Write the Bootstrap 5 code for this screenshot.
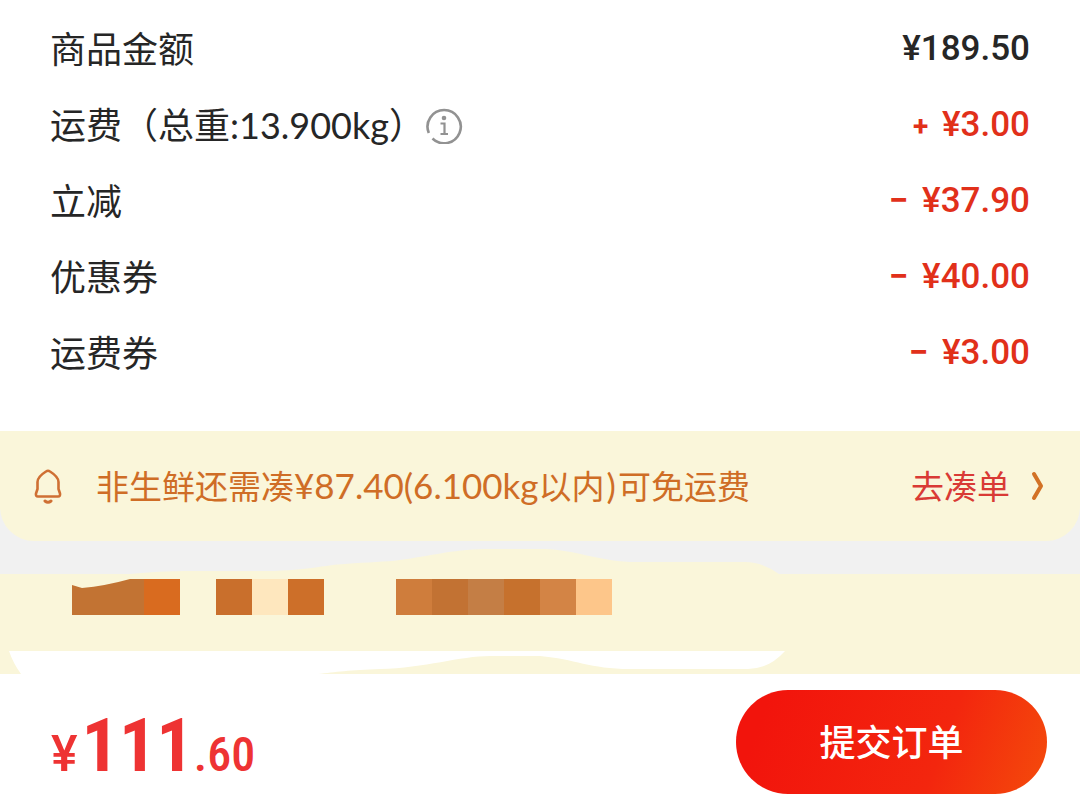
<!DOCTYPE html>
<html lang="zh-CN">
<head>
<meta charset="utf-8">
<meta name="viewport" content="width=device-width, initial-scale=1">
<title>确认订单</title>
<link href="https://cdn.jsdelivr.net/npm/bootstrap@5.3.0/dist/css/bootstrap.min.css" rel="stylesheet">
<style>
  body { font-family: Lato, "Noto Sans CJK SC", sans-serif; font-size: 36px; line-height: 76px; color: #262626; background: #fff; }
  .fees { padding: 11px 50px 40px; }
  .amount { font-family: Roboto, "Noto Sans CJK SC", sans-serif; font-size: 35px; font-weight: 500; white-space: pre; }
  .minus { color: #e1301a; }
  .sign { font-weight: 700; line-height: 1; margin-right: 5px; }
  .sign-plus { font-size: 28px; }
  .info-btn { width: 38px; height: 38px; }
  .notice-wrap { background: #f1f1f1; }
  .notice { background: #faf6da; color: #cf6d26; border-radius: 0 0 34px 34px; padding: 0 35px 0 34px; font-size: 33px; line-height: 110px; }
  .notice-num { font-size: 35px; line-height: 1; }
  .notice-paren { margin: 0 2px; }
  .notice-text { margin-left: 34px; }
  .notice-link { color: #d93a35; gap: 21px; }
  .redacted { height: 133px; }
  .checkout { padding: 16px 33px 17px 51px; }
  .total { color: #ee3333; font-family: Roboto, sans-serif; font-size: 50px; font-weight: 500; line-height: 80px; padding-top: 24px; }
  .total-int, .total-cents { font-family: "Liberation Sans Narrow", "Roboto Condensed", Roboto, sans-serif; }
  .total-int { font-size: 74px; font-weight: 700; line-height: 60px; margin-left: 4px; }
  .total-cents { font-size: 48px; line-height: 60px; }
  .submit { width: 311px; height: 104px; font-size: 36px; font-weight: 500; color: #fff; background: linear-gradient(110deg, #f2140c 10%, #f3260e 65%, #f44b0b 100%); }
  .submit:hover { color: #fff; }
</style>
</head>
<body>
<main>
  <section class="fees">
    <div class="d-flex justify-content-between"><span>商品金额</span><span class="amount">¥189.50</span></div>
    <div class="d-flex justify-content-between">
      <div class="d-flex align-items-center"><span>运费（总重:13.900kg）</span>
        <button type="button" class="btn border-0 p-0 d-flex align-items-center info-btn" aria-label="运费说明">
          <svg width="38" height="38" viewBox="0 0 38 38" fill="none" stroke="#929292">
            <path d="M7.500 32.500A16.600 16.600 0 1 0 3.800 27" stroke-width="2.600"/>
            <circle cx="19" cy="12" r="2.300" fill="#929292" stroke="none"/>
            <path d="M15.500 17.500h4v10M15.500 28h7.500" stroke-width="2.200"/>
          </svg>
        </button>
      </div>
      <span class="amount minus"><span class="sign sign-plus">+</span> ¥3.00</span>
    </div>
    <div class="d-flex justify-content-between"><span>立减</span><span class="amount minus"><span class="sign">−</span> ¥37.90</span></div>
    <div class="d-flex justify-content-between"><span>优惠券</span><span class="amount minus"><span class="sign">−</span> ¥40.00</span></div>
    <div class="d-flex justify-content-between"><span>运费券</span><span class="amount minus"><span class="sign">−</span> ¥3.00</span></div>
  </section>

  <section class="notice-wrap">
    <div class="notice d-flex align-items-center">
      <svg width="28" height="36" viewBox="0 0 28 36" fill="none" stroke="#cf7034" stroke-width="2.600" stroke-linecap="round" stroke-linejoin="round" aria-hidden="true">
        <path d="M4 28.500Q1.500 28.500 2 25.500L3.500 21V14C3.500 9 8 6 12 3.500Q14 2 16 3.500C20 6 24.500 9 24.500 14V21L26 25.500Q26.500 28.500 24 28.500Z"/>
        <path d="M11 33Q14 35.500 17 33" stroke-width="3"/>
      </svg>
      <span class="notice-text">非生鲜还需凑<span class="notice-num">¥87.40(6.100kg</span>以内<span class="notice-num notice-paren">)</span>可免运费</span>
      <a href="#" class="notice-link ms-auto d-flex align-items-center text-decoration-none"><span>去凑单</span>
        <svg width="14" height="30" viewBox="0 0 14 30" fill="none" stroke="#d27226" stroke-width="4" stroke-linecap="round" stroke-linejoin="round" aria-hidden="true"><path d="M3 3L10 15L3 27"/></svg>
      </a>
    </div>
    <svg class="redacted d-block w-100" viewBox="0 0 1080 133" preserveAspectRatio="none" aria-hidden="true">
      <path fill="#faf6da" d="M0 33H130Q160 30 185 30H275C315 28 325 24 345 23C370 21 385 21 400 19C430 15 450 9 485 8H545C575 9 595 19 630 21H745Q762 21 779 33H1080V133H0Z"/>
      <path fill="#fff" d="M9 110H785Q769 128 748 128H630C590 128 575 118 540 115H490C460 115 425 127 380 128C350 129 335 131 318 133H21Q13 122 9 110Z"/>
      <g shape-rendering="crispEdges">
        <rect x="144" y="38" width="36" height="36" fill="#d96b1f"/>
        <rect x="216" y="38" width="36" height="36" fill="#c96f2c"/>
        <rect x="252" y="38" width="36" height="36" fill="#fee7be"/>
        <rect x="288" y="38" width="36" height="36" fill="#cd6f29"/>
        <rect x="396" y="38" width="36" height="36" fill="#cf7d3c"/>
        <rect x="432" y="38" width="36" height="36" fill="#c27233"/>
        <rect x="468" y="38" width="36" height="36" fill="#c47e45"/>
        <rect x="504" y="38" width="36" height="36" fill="#c6712d"/>
        <rect x="540" y="38" width="36" height="36" fill="#d38445"/>
        <rect x="576" y="38" width="36" height="36" fill="#fdc68a"/>
      </g>
      <path fill="#c27333" d="M72 44L82 47Q105 45 130 38H144V74H72Z"/>
    </svg>
  </section>

  <footer class="checkout d-flex align-items-center justify-content-between">
    <div class="total">¥<span class="total-int">111</span><span class="total-cents">.60</span></div>
    <button type="button" class="btn border-0 rounded-pill submit">提交订单</button>
  </footer>
</main>
<script src="https://cdn.jsdelivr.net/npm/bootstrap@5.3.0/dist/js/bootstrap.bundle.min.js"></script>
</body>
</html>
